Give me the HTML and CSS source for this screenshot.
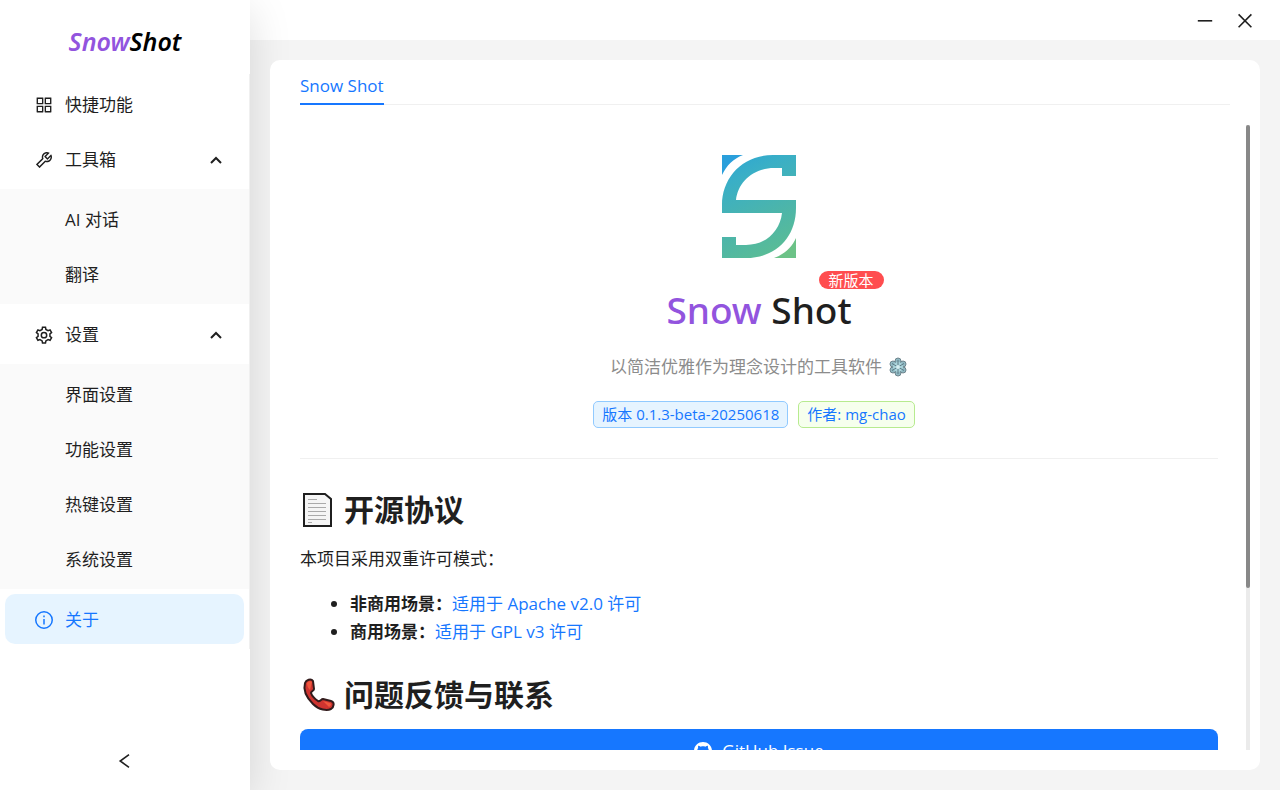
FILE: index.html
```html
<!DOCTYPE html>
<html lang="zh-CN">
<head>
  <meta charset="UTF-8">
  <meta name="viewport" content="width=device-width, initial-scale=1.0">
  <title>Snow Shot</title>
  <link rel="stylesheet" href="styles.css">
</head>
<body>
  <aside class="sidebar">
    <div class="brand"><span class="snow">Snow</span>Shot</div>
    <nav class="menu">
      <a class="item" href="#quick">
        <svg class="icon" viewBox="64 64 896 896"><path d="M464 144H160c-8.800 0-16 7.200-16 16v304c0 8.800 7.200 16 16 16h304c8.800 0 16-7.200 16-16V160c0-8.800-7.200-16-16-16zm-52 268H212V212h200v200zm452-268H560c-8.800 0-16 7.200-16 16v304c0 8.800 7.200 16 16 16h304c8.800 0 16-7.200 16-16V160c0-8.800-7.200-16-16-16zm-52 268H612V212h200v200zM464 544H160c-8.800 0-16 7.200-16 16v304c0 8.800 7.200 16 16 16h304c8.800 0 16-7.200 16-16V560c0-8.800-7.200-16-16-16zm-52 268H212V612h200v200zm452-268H560c-8.800 0-16 7.200-16 16v304c0 8.800 7.200 16 16 16h304c8.800 0 16-7.200 16-16V560c0-8.800-7.200-16-16-16zm-52 268H612V612h200v200z"/></svg>
        <span>快捷功能</span>
      </a>
      <button class="item" type="button" aria-expanded="true">
        <svg class="icon" viewBox="64 64 896 896"><path d="M876.600 239.500c-.5-.9-1.200-1.800-2-2.500-5-5-13.100-5-18.100 0L684.200 409.300l-67.900-67.900L788.700 169c.8-.8 1.400-1.600 2-2.500 3.600-6.100 1.600-13.900-4.500-17.500-98.200-58-226.800-44.700-311.300 39.700-67 67-89.200 162-66.500 247.400l-293 293c-3 3-2.800 7.900.3 11l169.700 169.700c3.100 3.100 8.100 3.300 11 .3l292.900-292.900c85.500 22.800 180.500.7 247.600-66.400 84.400-84.500 97.700-213.100 39.700-311.300zM786 499.800c-58.100 58.100-145.300 69.300-214.600 33.600l-8.800 8.800-.1-.1-274 274.100-79.200-79.200 230.100-230.100s0 .1.100.1l52.800-52.800c-35.700-69.300-24.500-156.500 33.600-214.600a184.200 184.200 0 0 1 144-53.500L537 318.900a32.050 32.050 0 0 0 0 45.300l124.500 124.500a32.050 32.050 0 0 0 45.300 0l132.800-132.800c3.700 51.800-14.400 104.800-53.600 143.900z"/></svg>
        <span>工具箱</span>
        <svg class="arrow" viewBox="0 0 12 12"><path d="M1 9l5-5 5 5"/></svg>
      </button>
      <div class="submenu">
        <a class="item" href="#chat">AI 对话</a>
        <a class="item" href="#translate">翻译</a>
      </div>
      <button class="item" type="button" aria-expanded="true">
        <svg class="icon line" viewBox="0 0 24 24"><path d="M9.500 4.600 10 1.800h4l.5 2.800 2.900 1.700 2.700-1 2 3.500-2.200 1.800v3.200l2.200 1.800-2 3.500-2.700-1-2.900 1.700-.5 2.800h-4l-.5-2.800-2.900-1.700-2.700 1-2-3.500 2.200-1.800v-3.200L1.900 8.800l2-3.500 2.700 1z"/><circle cx="12" cy="12.200" r="3.600"/></svg>
        <span>设置</span>
        <svg class="arrow" viewBox="0 0 12 12"><path d="M1 9l5-5 5 5"/></svg>
      </button>
      <div class="submenu">
        <a class="item" href="#interface">界面设置</a>
        <a class="item" href="#function">功能设置</a>
        <a class="item" href="#hotkey">热键设置</a>
        <a class="item" href="#system">系统设置</a>
      </div>
      <a class="item active" href="#about" aria-current="page">
        <svg class="icon line" viewBox="0 0 24 24"><circle cx="12" cy="12" r="11"/><path d="M12 10.500v7.500M12 6v2.200"/></svg>
        <span>关于</span>
      </a>
    </nav>
    <button class="collapse" type="button" aria-label="收起">
      <svg viewBox="0 0 20 20"><path d="M15 2 4 10l11 8"/></svg>
    </button>
  </aside>

  <div class="main">
    <header class="titlebar">
      <button type="button" aria-label="最小化"><svg viewBox="0 0 20 20"><path d="M1 11h18"/></svg></button>
      <button type="button" aria-label="关闭"><svg viewBox="0 0 20 20"><path d="M2 3l16 16M18 3 2 19"/></svg></button>
    </header>

    <main class="card">
      <div class="tabs">
        <a class="tab" href="#about">Snow Shot</a>
      </div>
      <div class="body">
        <div class="content">
          <section class="hero">
            <svg class="logo" viewBox="0 0 74 103">
              <defs>
                <linearGradient id="logoFill" gradientUnits="userSpaceOnUse" x1="0" y1="0" x2="50" y2="103">
                  <stop offset="0" stop-color="#2ba5d4"/>
                  <stop offset="0.25" stop-color="#3aafc6"/>
                  <stop offset="0.65" stop-color="#4cb5aa"/>
                  <stop offset="1" stop-color="#5bbd94"/>
                </linearGradient>
              </defs>
              <path fill="url(#logoFill)" d="M74 0H51C20 0 0 23 0 50v8h60c-2 18-16 32-36 32H14v-8H0v21h24c29 0 50-20 50-50v-8H14c2-18 17-32 38-32h8v8h14z"/>
              <path fill="#2a9fdb" d="M0 0h21C11 4 5 10 0 20z"/>
              <path fill="#6cc287" d="M74 103H52c11-4 18-11 22-20z"/>
            </svg>
            <h1><span class="snow">Snow</span> Shot<sup class="badge">新版本</sup></h1>
            <p class="slogan">以简洁优雅作为理念设计的工具软件
              <svg class="flake" viewBox="0 0 20 20" aria-hidden="true">
                <g fill="#8fb8c2" stroke="#6f858d"><circle cx="10" cy="4" r="3"/><circle cx="15" cy="7" r="3"/><circle cx="15" cy="13" r="3"/><circle cx="10" cy="16" r="3"/><circle cx="5" cy="13" r="3"/><circle cx="5" cy="7" r="3"/></g>
                <circle cx="10" cy="10" r="5" fill="#a9d3da"/>
                <path stroke="#5c7a85" d="M10 3v14M4 6.500l12 7M16 6.500l-12 7"/>
                <circle cx="10" cy="10" r="2" fill="#d5eff2"/>
              </svg>
            </p>
            <div class="tags">
              <a class="tag blue" href="#version">版本 0.1.3-beta-20250618</a>
              <a class="tag green" href="#author">作者: mg-chao</a>
            </div>
          </section>

          <h2>
            <svg class="emoji" viewBox="0 0 36 36" aria-hidden="true"><path fill="#f5f5f5" stroke="#1f1f1f" stroke-width="2" d="M4 2h21l6 5v27H4z"/><path stroke="#aaa" d="M8 7.500h9M8 11.500h18M8 15.500h18M8 19.500h18M8 23.500h18M8 27.500h18M8 30.500h4"/></svg>
            开源协议
          </h2>
          <p>本项目采用双重许可模式：</p>
          <ul>
            <li><strong>非商用场景：</strong><a href="#apache">适用于 Apache v2.0 许可</a></li>
            <li><strong>商用场景：</strong><a href="#gpl">适用于 GPL v3 许可</a></li>
          </ul>

          <h2>
            <svg class="emoji" viewBox="0 0 36 36" aria-hidden="true"><path fill="#cf3430" stroke="#321b1c" stroke-width="2" stroke-linejoin="round" d="M5 6c1-3 6-5 8-2l1 8c0 2-3 2-3 4 1 3 4 6 7 8 2 1 3-2 5-2l8 2c4 1 3 6 0 8-4 2-12 1-18-5C7 21 3 13 5 6z"/><path fill="#f0573d" d="M7 6c1-2 4-2 5-1l-2 8c-2-2-3-4-3-7zM23 24l7 2c2 1 1 3-1 4-2-2-4-4-6-6z"/></svg>
            问题反馈与联系
          </h2>
          <a class="issue" href="#issue">
            <svg viewBox="0 0 16 16"><path d="M8 0C3.580 0 0 3.580 0 8c0 3.540 2.290 6.530 5.470 7.590.4.070.55-.17.55-.38 0-.19-.01-.82-.01-1.490-2.010.37-2.530-.49-2.690-.94-.09-.23-.48-.94-.82-1.130-.28-.15-.68-.52-.01-.53.63-.01 1.080.58 1.230.82.72 1.210 1.870.87 2.330.66.07-.52.28-.87.51-1.070-1.780-.2-3.640-.89-3.640-3.950 0-.87.31-1.590.82-2.150-.08-.2-.36-1.020.08-2.120 0 0 .67-.21 2.200.82.64-.18 1.320-.27 2-.27s1.360.09 2 .27c1.530-1.040 2.200-.82 2.200-.82.44 1.100.16 1.920.08 2.120.51.56.82 1.270.82 2.150 0 3.070-1.870 3.750-3.650 3.950.29.25.54.73.54 1.480 0 1.070-.01 1.930-.01 2.200 0 .21.15.46.55.38A8 8 0 0 0 16 8c0-4.420-3.580-8-8-8z"/></svg>
            GitHub Issue
          </a>
        </div>
        <div class="scrollbar"><div class="thumb"></div></div>
      </div>
    </main>
  </div>
</body>
</html>
```

FILE: styles.css
```css
* {
  box-sizing: border-box;
}

body {
  margin: 0;
  height: 100vh;
  display: flex;
  overflow: hidden;
  background: #f4f4f4;
  color: #1f1f1f;
  font-family: "Open Sans", "Noto Sans CJK SC", sans-serif;
  font-size: 17px;
  line-height: 28px;
}

a {
  color: #1677ff;
  text-decoration: none;
}

button {
  border: 0;
  padding: 0;
  background: none;
  color: inherit;
  font: inherit;
  cursor: pointer;
}

.snow {
  color: #9254de;
}

/* sidebar */
.sidebar {
  flex: 0 0 250px;
  display: flex;
  flex-direction: column;
  background: #fff;
  box-shadow: 0 10px 40px rgba(0, 0, 0, 0.13);
}

.brand {
  padding: 21px 0 13px;
  text-align: center;
  color: #000;
  font-family: "Noto Sans", sans-serif;
  font-size: 25px;
  line-height: 40px;
  font-weight: 600;
  font-style: italic;
}

.menu {
  display: flex;
  flex-direction: column;
  gap: 5px;
  padding: 5px 0;
  border-right: 1px solid #f0f0f0;
}

.item {
  display: flex;
  align-items: center;
  gap: 12px;
  height: 50px;
  margin: 0 5px;
  padding: 1px 22px 0 30px;
  border-radius: 10px;
  color: #1f1f1f;
}

.icon {
  width: 18px;
  height: 18px;
  fill: currentColor;
}

.icon.line {
  fill: none;
  stroke: currentColor;
  stroke-width: 2;
}

.arrow {
  width: 12px;
  height: 12px;
  margin-left: auto;
  fill: none;
  stroke: currentColor;
  stroke-width: 2;
}

.submenu {
  display: flex;
  flex-direction: column;
  gap: 5px;
  padding: 5px 0;
  background: #fafafa;
}

.submenu .item {
  padding-left: 60px;
}

.item.active {
  background: #e6f4ff;
  color: #1677ff;
}

.collapse {
  margin: auto auto 20px;
  height: 18px;
}

.collapse svg,
.titlebar svg {
  display: block;
  width: 16px;
  height: 16px;
  fill: none;
  stroke: currentColor;
  stroke-width: 2;
}

/* right side */
.main {
  flex: 1;
  min-width: 0;
  display: flex;
  flex-direction: column;
}

.titlebar {
  display: flex;
  justify-content: flex-end;
  align-items: center;
  gap: 24px;
  height: 40px;
  padding: 0 27px;
  background: #fff;
}

.sidebar,
.card {
  position: relative;
}

.card {
  flex: 1;
  min-height: 0;
  display: flex;
  flex-direction: column;
  margin: 20px;
  padding-bottom: 20px;
  border-radius: 10px;
  background: #fff;
}

.tabs {
  display: flex;
  margin: 0 30px 20px;
  padding-top: 12px;
  border-bottom: 1px solid #f0f0f0;
}

.tab {
  height: 33px;
  margin-bottom: -1px;
  border-bottom: 2px solid #1677ff;
}

.body {
  flex: 1;
  min-height: 0;
  display: flex;
  gap: 28px;
  padding: 0 10px 0 30px;
}

.content {
  flex: 1;
  overflow: hidden;
}

.scrollbar {
  width: 4px;
  background: #ebebeb;
}

.thumb {
  height: 74%;
  border-radius: 2px;
  background: #888;
}

/* about */
.hero {
  display: flex;
  flex-direction: column;
  align-items: center;
  padding: 30px 0;
  border-bottom: 1px solid #f0f0f0;
}

.logo {
  width: 74px;
  height: 103px;
}

h1 {
  position: relative;
  margin: 27px 0 18px;
  font-family: "Noto Sans", sans-serif;
  font-size: 37px;
  line-height: 50px;
  font-weight: 500;
}

.badge {
  position: absolute;
  top: -14px;
  right: -32px;
  padding: 0 10px;
  border-radius: 10px;
  background: #ff4d4f;
  color: #fff;
  font-family: "Noto Sans CJK SC", sans-serif;
  font-size: 15px;
  line-height: 18px;
  font-weight: 400;
}

p {
  margin: 0;
}

.slogan {
  display: flex;
  align-items: center;
  gap: 6px;
  color: #8c8c8c;
}

.flake {
  width: 20px;
  height: 20px;
}

.tags {
  display: flex;
  gap: 10px;
  margin: 20px 10px 0 0;
}

.tag {
  padding: 0 8px;
  border: 1px solid;
  border-radius: 5px;
  font-size: 15px;
  line-height: 25px;
}

.tag.blue {
  background: #e6f4ff;
  border-color: #91caff;
}

.tag.green {
  background: #f6ffed;
  border-color: #b7eb8f;
}

h2 {
  display: flex;
  align-items: center;
  gap: 8px;
  margin: 31px 0 15px;
  font-size: 30px;
  line-height: 40px;
  font-weight: 700;
}

.emoji {
  width: 36px;
  height: 36px;
}

ul {
  margin: 17px 0 0;
  padding-left: 50px;
}

.content ul + h2 {
  margin: 29px 0 14px;
}

.issue {
  display: flex;
  justify-content: center;
  align-items: center;
  gap: 10px;
  height: 44px;
  border-radius: 8px;
  background: #1677ff;
  color: #fff;
}

.issue svg {
  width: 18px;
  height: 18px;
  fill: currentColor;
}
```
